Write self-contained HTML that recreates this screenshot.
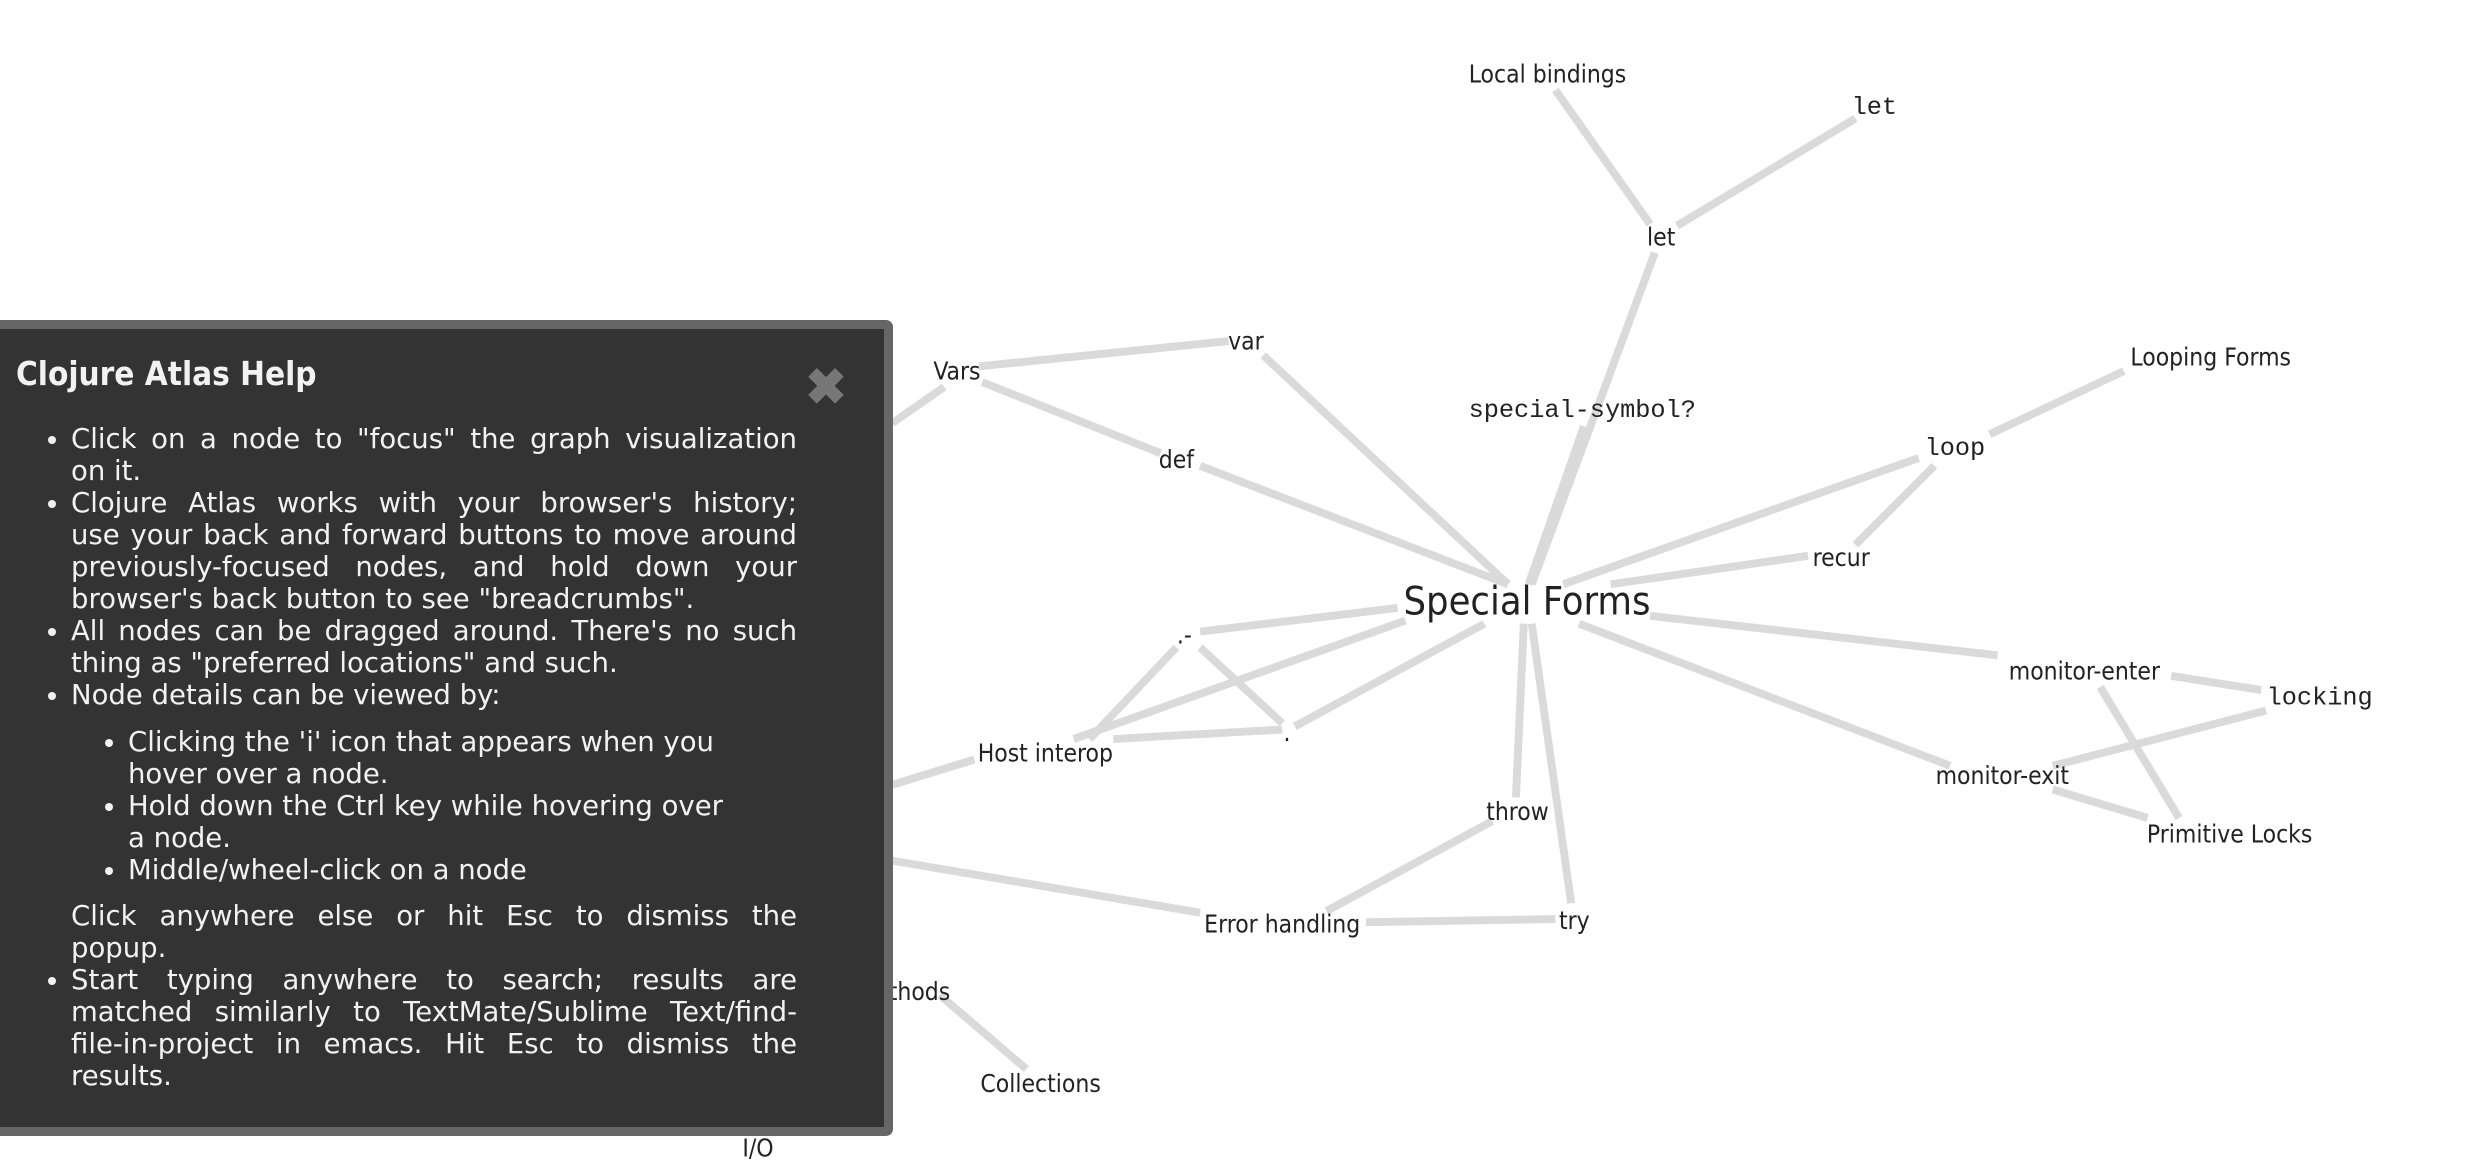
<!DOCTYPE html>
<html><head><meta charset="utf-8"><style>
html,body{margin:0;padding:0;background:#fff;width:2476px;height:1166px;overflow:hidden;position:relative}
svg{position:absolute;left:0;top:0}
#panel{position:absolute;left:-12px;top:320px;width:905px;height:816px;box-sizing:border-box;background:#333;border:9px solid #666;border-radius:7px;color:#f2f2f2;font-family:"DejaVu Sans","Liberation Sans",sans-serif;}
#panel h2{position:absolute;left:19px;top:25px;margin:0;font-size:33px;font-weight:bold;line-height:40px;font-family:"DejaVu Sans Condensed","DejaVu Sans",sans-serif}
#close{position:absolute;left:808px;top:33px;font-size:50px;font-weight:bold;color:#777;line-height:50px;font-family:"Liberation Sans",sans-serif}
ul{margin:0;padding:0}
#main{position:absolute;left:74px;top:94px;width:726px;font-size:27.5px;line-height:32px}
#main li{margin:0;padding:0}
#main div{white-space:nowrap}
#main div.j{text-align:justify;text-align-last:justify;white-space:normal}
ul ul{margin-left:57px;width:614px;margin-top:15px;margin-bottom:14px;padding:0}
ul ul li{list-style:disc}
</style></head><body>
<svg width="2476" height="1166" viewBox="0 0 1568 738.4">
<g stroke="#d4d4d4" stroke-width="5" opacity="0.85" fill="none">
<line x1="985" y1="57" x2="1045" y2="142"/>
<line x1="1175" y1="75" x2="1062" y2="143"/>
<line x1="1048" y1="160" x2="970" y2="370"/>
<line x1="1003" y1="270" x2="968" y2="370"/>
<line x1="620" y1="232" x2="778" y2="216"/>
<line x1="622" y1="242" x2="735" y2="287"/>
<line x1="598" y1="245" x2="565" y2="268"/>
<line x1="800" y1="225" x2="955" y2="370"/>
<line x1="760" y1="295" x2="955" y2="370"/>
<line x1="990" y1="370" x2="1215" y2="290"/>
<line x1="1225" y1="295" x2="1175" y2="345"/>
<line x1="1260" y1="275" x2="1345" y2="235"/>
<line x1="1020" y1="370" x2="1145" y2="352"/>
<line x1="1045" y1="390" x2="1265" y2="415"/>
<line x1="1000" y1="395" x2="1235" y2="485"/>
<line x1="1375" y1="428" x2="1432" y2="437"/>
<line x1="1435" y1="450" x2="1300" y2="485"/>
<line x1="1330" y1="435" x2="1380" y2="518"/>
<line x1="1300" y1="500" x2="1360" y2="518"/>
<line x1="965" y1="395" x2="960" y2="505"/>
<line x1="970" y1="395" x2="995" y2="572"/>
<line x1="945" y1="520" x2="840" y2="577"/>
<line x1="865" y1="584" x2="985" y2="582"/>
<line x1="760" y1="578" x2="565" y2="545"/>
<line x1="760" y1="400" x2="885" y2="385"/>
<line x1="745" y1="410" x2="690" y2="468"/>
<line x1="760" y1="410" x2="812" y2="458"/>
<line x1="820" y1="460" x2="940" y2="395"/>
<line x1="705" y1="468" x2="812" y2="462"/>
<line x1="680" y1="468" x2="890" y2="393"/>
<line x1="617" y1="481" x2="565" y2="497"/>
<line x1="650" y1="677" x2="595" y2="630"/>
</g>
<g font-family="'DejaVu Sans Condensed','Liberation Sans',sans-serif" font-size="15.5" fill="#222" text-anchor="middle" dominant-baseline="central">
<text x="980" y="47">Local bindings</text>
<text x="1052" y="150">let</text>
<text x="789" y="216">var</text>
<text x="606" y="235">Vars</text>
<text x="745" y="291">def</text>
<text x="1400" y="226">Looping Forms</text>
<text x="1166" y="353">recur</text>
<text x="967" y="381" font-size="25">Special Forms</text>
<text x="750" y="402">.-</text>
<text x="815" y="464">.</text>
<text x="662" y="477">Host interop</text>
<text x="1320" y="425">monitor-enter</text>
<text x="1268" y="491">monitor-exit</text>
<text x="1412" y="528">Primitive Locks</text>
<text x="961" y="514">throw</text>
<text x="997" y="583">try</text>
<text x="812" y="585">Error handling</text>
<text x="659" y="686">Collections</text>
<text x="572" y="628">Methods</text>
<text x="480" y="727">I/O</text>
</g>
<g font-family="'Liberation Mono',monospace" font-size="16" fill="#222" text-anchor="middle" dominant-baseline="central">
<text x="1187" y="68">let</text>
<text x="1002" y="260">special-symbol?</text>
<text x="1238" y="284">loop</text>
<text x="1469" y="442">locking</text>
</g>
</svg>
<div id="panel">
<h2>Clojure Atlas Help</h2>
<div id="close">✖</div>
<div id="main"><ul>
<li><div class="j">Click on a node to "focus" the graph visualization</div><div>on it.</div></li>
<li><div class="j">Clojure Atlas works with your browser's history;</div><div class="j">use your back and forward buttons to move around</div><div class="j">previously-focused nodes, and hold down your</div><div>browser's back button to see "breadcrumbs".</div></li>
<li><div class="j">All nodes can be dragged around. There's no such</div><div>thing as "preferred locations" and such.</div></li>
<li><div>Node details can be viewed by:</div>
<ul>
<li><div>Clicking the 'i' icon that appears when you</div><div>hover over a node.</div></li>
<li><div>Hold down the Ctrl key while hovering over</div><div>a node.</div></li>
<li><div>Middle/wheel-click on a node</div></li>
</ul>
<div class="j">Click anywhere else or hit Esc to dismiss the</div><div>popup.</div></li>
<li><div class="j">Start typing anywhere to search; results are</div><div class="j">matched similarly to TextMate/Sublime Text/find-</div><div class="j">file-in-project in emacs. Hit Esc to dismiss the</div><div>results.</div></li>
</ul></div>
</div>
</body></html>
